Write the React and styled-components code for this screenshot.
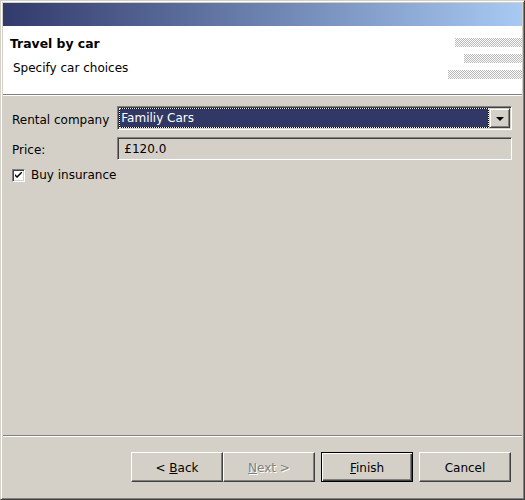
import styled, { createGlobalStyle } from "styled-components";

const GlobalStyle = createGlobalStyle`
  html, body {
    margin: 0;
    padding: 0;
    background: #d4d0c8;
  }
  body {
    font-family: "DejaVu Sans", Verdana, sans-serif;
    font-size: 12px;
    color: #000;
  }
`;

const Window = styled.div`
  width: 525px;
  height: 500px;
  box-sizing: border-box;
  background: #d4d0c8;
  border-top: 1px solid #d4d0c8;
  border-left: 1px solid #d4d0c8;
  border-right: 1px solid #404040;
  border-bottom: 1px solid #404040;
  box-shadow: inset 1px 1px #fff, inset -1px -1px #808080;
  padding: 2px;
  display: flex;
  flex-direction: column;
`;

const Banner = styled.div`
  height: 23px;
  flex-shrink: 0;
  background: linear-gradient(to right, #313a6b, #a7caf2);
`;

const Header = styled.div`
  height: 68px;
  flex-shrink: 0;
  background: #fff;
  display: flex;
  justify-content: space-between;
`;

const HeaderText = styled.div`
  padding: 11px 0 0 7px;
  display: flex;
  flex-direction: column;
  gap: 10px;
`;

const Title = styled.div`
  font-weight: bold;
  font-size: 12.4px;
  line-height: 14px;
`;

const Subtitle = styled.div`
  padding-left: 3px;
  line-height: 14px;
`;

const Decor = styled.div`
  padding-top: 12px;
  display: flex;
  flex-direction: column;
  align-items: flex-end;
  gap: 7px;

  svg {
    display: block;
  }
`;

const Separator = styled.div`
  height: 1px;
  flex-shrink: 0;
  background: #808080;
  border-bottom: 1px solid #fff;
`;

const Form = styled.div`
  flex: 1;
  padding: 10px 10px 0 9px;
  display: grid;
  grid-template-columns: auto 1fr;
  column-gap: 8px;
  row-gap: 7px;
  align-content: start;
  align-items: center;
`;

const Label = styled.div`
  line-height: 14px;
  padding-top: 3px;
  white-space: nowrap;
`;

const Sunken = styled.div`
  box-sizing: border-box;
  border-top: 1px solid #808080;
  border-left: 1px solid #808080;
  border-right: 1px solid #fff;
  border-bottom: 1px solid #fff;
  box-shadow: inset 1px 1px #404040, inset -1px -1px #d4d0c8;
  padding: 1px;
`;

const Combo = styled(Sunken)`
  height: 24px;
  background: #fff;
  display: flex;
`;

const Selection = styled.div`
  flex: 1;
  background: #000;
  display: flex;
`;

const SelectionInner = styled.div`
  flex: 1;
  border: 1px dotted #f0f0e0;
  background: #313866;
  background-clip: padding-box;
  color: #fff;
  line-height: 19px;
  padding-left: 1px;
`;

const DropButton = styled.div`
  width: 21px;
  box-sizing: border-box;
  background: #d4d0c8;
  border-top: 1px solid #d4d0c8;
  border-left: 1px solid #d4d0c8;
  border-right: 1px solid #404040;
  border-bottom: 1px solid #404040;
  box-shadow: inset 1px 1px #fff, inset -1px -1px #808080;
  display: flex;
  align-items: center;
  justify-content: center;

  &::after {
    content: "";
    border-left: 4px solid transparent;
    border-right: 4px solid transparent;
    border-top: 4px solid #000;
    margin-top: 1px;
  }
`;

const Field = styled(Sunken)`
  height: 23px;
  background: #d4d0c8;
  padding: 1px 6px;
  line-height: 20px;
`;

const CheckRow = styled.label`
  grid-column: 1 / -1;
  margin-top: 1px;
  display: flex;
  align-items: center;
  gap: 6px;
  line-height: 14px;
`;

const CheckBox = styled(Sunken)`
  width: 13px;
  height: 13px;
  background: #fff;
  display: flex;
  align-items: center;
  justify-content: center;
  padding: 0;
`;

const Footer = styled.div`
  flex-shrink: 0;
  padding: 15px 11px 15px 0;
  display: flex;
  justify-content: flex-end;
  gap: 6px;
`;

const Pair = styled.div`
  display: flex;
`;

const Button = styled.button`
  width: 92px;
  height: 30px;
  box-sizing: border-box;
  margin: 0;
  padding: 1px 0 0;
  font-family: inherit;
  font-size: 12px;
  color: ${(p) => (p.disabled ? "#808080" : "#000")};
  text-shadow: ${(p) => (p.disabled ? "1px 1px #fff" : "none")};
  background: #d4d0c8;
  border-top: 1px solid #fff;
  border-left: 1px solid #fff;
  border-right: 1px solid #404040;
  border-bottom: 1px solid #404040;
  box-shadow: inset -1px -1px #808080;
  ${(p) =>
    p.$default &&
    `
    border: 1px solid #000;
    box-shadow: inset 1px 1px #fff, inset -1px -1px #404040, inset -2px -2px #808080;
  `}
`;

const Key = styled.span`
  text-decoration: underline;
`;

function Strip({ width }) {
  return (
    <svg width={width} height="9">
      <defs>
        <pattern id="checker" width="2" height="2" patternUnits="userSpaceOnUse">
          <rect width="2" height="2" fill="#fff" />
          <rect width="1" height="1" fill="#b8b8b8" />
          <rect x="1" y="1" width="1" height="1" fill="#b8b8b8" />
        </pattern>
      </defs>
      <rect width={width} height="9" fill="url(#checker)" />
    </svg>
  );
}

export default function App() {
  return (
    <>
      <GlobalStyle />
      <Window>
        <Banner />
        <Header>
          <HeaderText>
            <Title>Travel by car</Title>
            <Subtitle>Specify car choices</Subtitle>
          </HeaderText>
          <Decor>
            <Strip width={67} />
            <Strip width={58} />
            <Strip width={74} />
          </Decor>
        </Header>
        <Separator />
        <Form>
          <Label>Rental company</Label>
          <Combo>
            <Selection>
              <SelectionInner>Familiy Cars</SelectionInner>
            </Selection>
            <DropButton />
          </Combo>
          <Label>Price:</Label>
          <Field>£120.0</Field>
          <CheckRow>
            <CheckBox>
              <svg width="7" height="7" viewBox="0 0 7 7">
                <path d="M0 2 L0 4 L2 6 L7 1 L7 -1 L2 4 Z" fill="#000" />
              </svg>
            </CheckBox>
            Buy insurance
          </CheckRow>
        </Form>
        <Separator />
        <Footer>
          <Pair>
            <Button>
              &lt; <Key>B</Key>ack
            </Button>
            <Button disabled>
              <Key>N</Key>ext &gt;
            </Button>
          </Pair>
          <Button $default>
            <Key>F</Key>inish
          </Button>
          <Button>Cancel</Button>
        </Footer>
      </Window>
    </>
  );
}
